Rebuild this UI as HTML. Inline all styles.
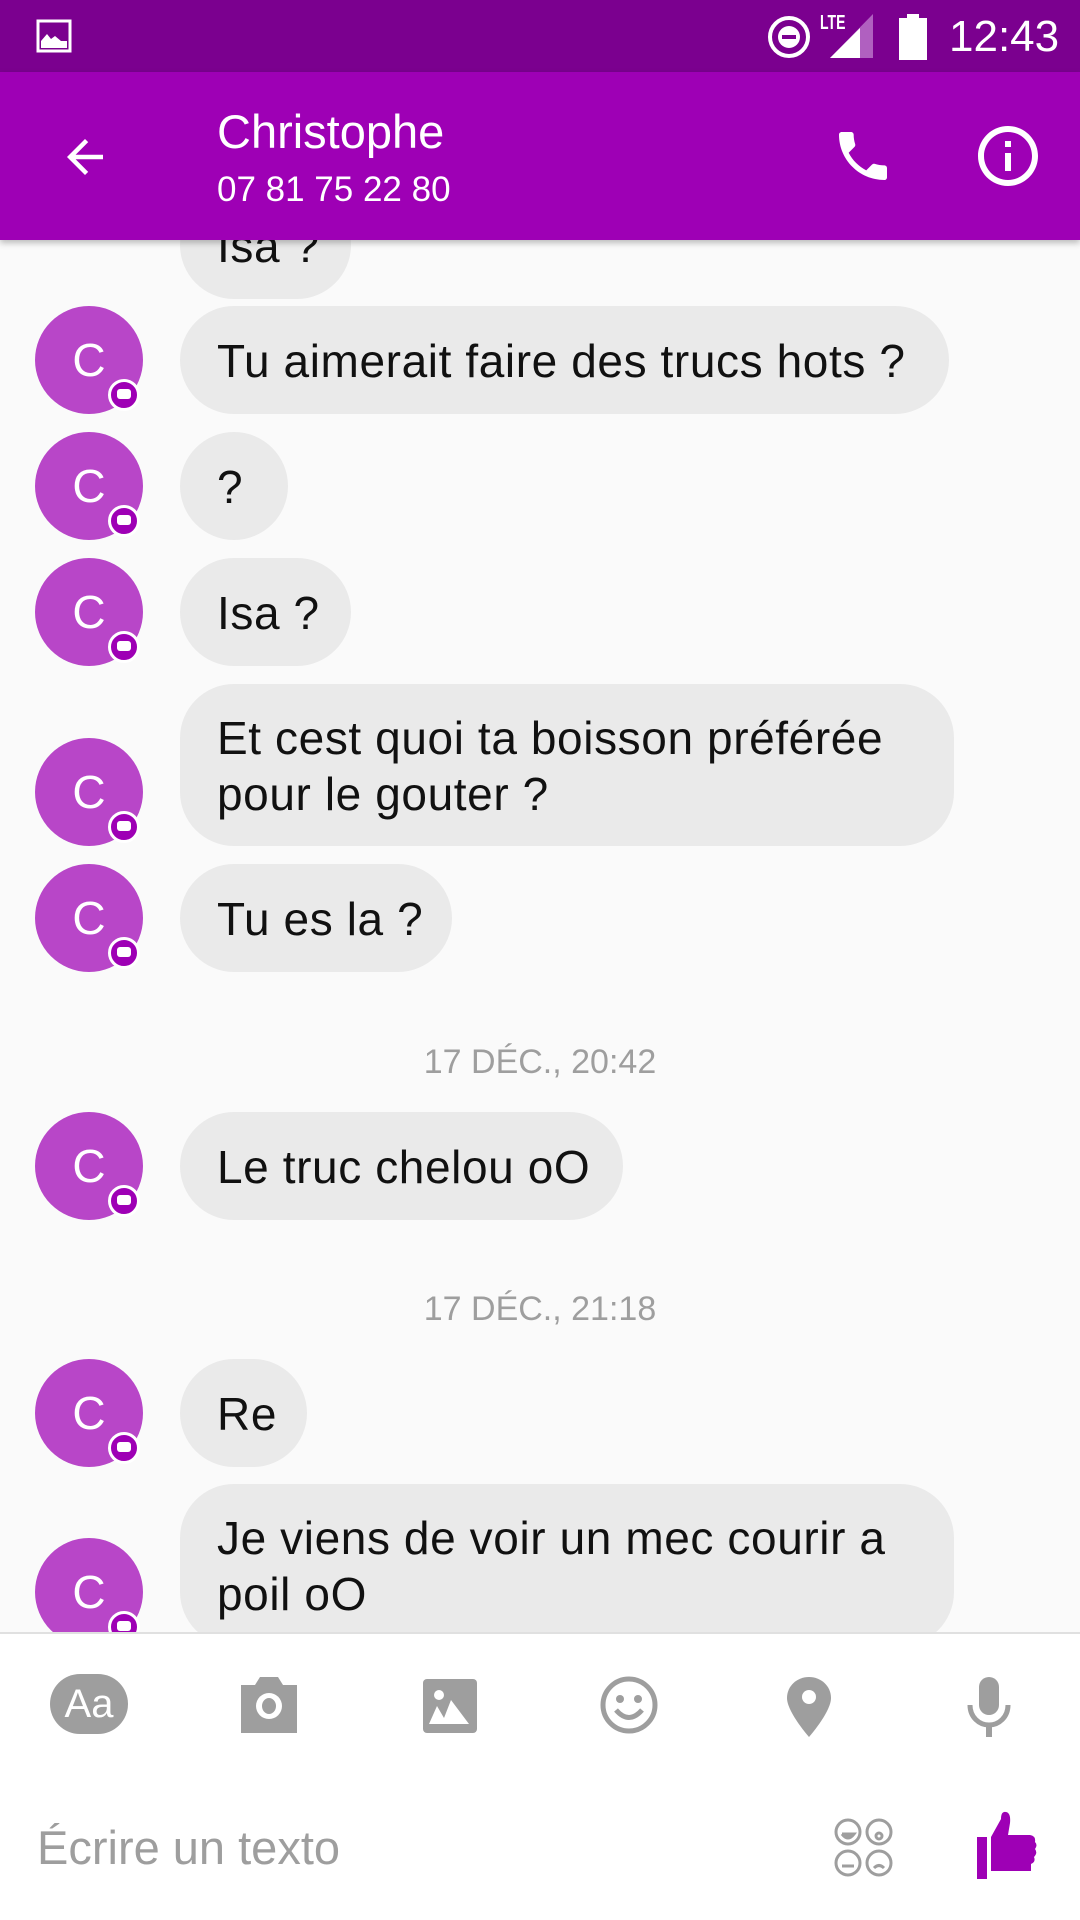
<!DOCTYPE html>
<html><head><meta charset="utf-8"><style>
*{margin:0;padding:0;box-sizing:border-box}
body{width:1080px;height:1920px;overflow:hidden;background:#fafafa;font-family:"Liberation Sans",sans-serif;position:relative}
.sb{position:absolute;left:0;top:0;width:1080px;height:72px;background:#7b008f}
.tb{position:absolute;left:0;top:72px;width:1080px;height:168px;background:#9e00b5;box-shadow:0 3px 6px rgba(0,0,0,.25);z-index:5}
.t1{position:absolute;left:217px;top:32px;color:#fff;font-size:47px}
.t2{position:absolute;left:217px;top:98px;color:#fff;font-size:35px}
.b{position:absolute;left:180px;background:#eaeaea;border-radius:54px;padding:27px 37px 0 37px;font-size:46px;letter-spacing:0.6px;line-height:56px;color:#111;height:108px;white-space:nowrap}
.av{position:absolute;left:35px;width:108px;height:108px;border-radius:50%;background:#b846c8;color:#fff;font-size:46px;text-align:center;line-height:108px}
.bd{position:absolute;left:73px;top:73px;width:32px;height:32px;border-radius:50%;background:#9e00b5;border:3px solid #fff}
.bd:after{content:"";position:absolute;left:6px;top:7px;width:14px;height:10px;background:#fff;border-radius:3px}
.ts{position:absolute;left:0;width:1080px;text-align:center;color:#9e9e9e;font-size:34px}
.bot{position:absolute;left:0;top:1632px;width:1080px;height:288px;background:#fff;border-top:2px solid #e0e0e0;z-index:4}
</style></head><body>
<div class="sb">
<svg style="position:absolute;left:36px;top:19px" width="36" height="34" viewBox="0 0 36 34"><rect x="2" y="2" width="32" height="30" fill="none" stroke="#fff" stroke-width="3"/><path d="M5 29 L5 22 L11 15 L15 20 L19 17 L25 22 L31 22 L31 29Z" fill="#fff"/></svg>
<svg style="position:absolute;left:766px;top:14px" width="46" height="46" viewBox="0 0 46 46"><circle cx="23" cy="23" r="19" fill="none" stroke="#fff" stroke-width="4"/><circle cx="23" cy="23" r="11" fill="#fff"/><rect x="16" y="21" width="14" height="4" fill="#7b008f"/></svg>
<div style="position:absolute;left:820px;top:12px;color:#fff;font-size:20px;font-weight:bold;transform:scaleX(.7);transform-origin:left">LTE</div>
<svg style="position:absolute;left:830px;top:14px" width="45" height="44" viewBox="0 0 45 44"><path d="M43 0 L43 44 L0 44Z" fill="#b060c0"/><path d="M30 14 L30 44 L0 44Z" fill="#fff"/></svg>
<svg style="position:absolute;left:898px;top:14px" width="30" height="46" viewBox="0 0 30 46"><rect x="9" y="0" width="12" height="5" fill="#fff"/><rect x="1" y="4" width="28" height="42" fill="#fff"/></svg>
<div style="position:absolute;left:949px;top:12px;color:#fff;font-size:44px">12:43</div>
</div>
<div class="tb">
<svg style="position:absolute;left:58px;top:58px" width="54" height="54" viewBox="0 0 24 24"><path d="M20 11H7.83l5.59-5.59L12 4l-8 8 8 8 1.41-1.41L7.83 13H20v-2z" fill="#fff"/></svg>
<div class="t1">Christophe</div>
<div class="t2">07 81 75 22 80</div>
<svg style="position:absolute;left:831px;top:52px" width="64" height="64" viewBox="0 0 24 24"><path d="M6.62 10.79c1.440 2.83 3.76 5.14 6.59 6.59l2.2-2.2c.27-.27.67-.36 1.02-.24 1.12.37 2.33.57 3.570.57.55 0 1 .45 1 1V20c0 .55-.45 1-1 1-9.39 0-17-7.61-17-17 0-.55.45-1 1-1h3.5c.55 0 1 .45 1 1 0 1.25.2 2.45.57 3.57.11.35.03.74-.25 1.020l-2.2 2.2z" fill="#fff"/></svg>
<svg style="position:absolute;left:972px;top:48px" width="72" height="72" viewBox="0 0 24 24"><path d="M11 7h2v2h-2zm0 4h2v6h-2zm1-9C6.48 2 2 6.48 2 12s4.48 10 10 10 10-4.48 10-10S17.52 2 12 2zm0 18c-4.41 0-8-3.59-8-8s3.59-8 8-8 8 3.59 8 8-3.59 8-8 8z" fill="#fff"/></svg>
</div>

<div class="b" style="top:191px;width:171px">Isa ?</div>

<div class="av" style="top:306px">C<div class="bd"></div></div>
<div class="b" style="top:306px;width:769px">Tu aimerait faire des trucs hots ?</div>

<div class="av" style="top:432px">C<div class="bd"></div></div>
<div class="b" style="top:432px;width:108px">?</div>

<div class="av" style="top:558px">C<div class="bd"></div></div>
<div class="b" style="top:558px;width:171px">Isa ?</div>

<div class="av" style="top:738px">C<div class="bd"></div></div>
<div class="b" style="top:684px;width:774px;height:162px;padding-top:26px">Et cest quoi ta boisson préférée<br>pour le gouter ?</div>

<div class="av" style="top:864px">C<div class="bd"></div></div>
<div class="b" style="top:864px;width:272px">Tu es la ?</div>

<div class="ts" style="top:1043px">17 DÉC., 20:42</div>

<div class="av" style="top:1112px">C<div class="bd"></div></div>
<div class="b" style="top:1112px;width:443px">Le truc chelou oO</div>

<div class="ts" style="top:1290px">17 DÉC., 21:18</div>

<div class="av" style="top:1359px">C<div class="bd"></div></div>
<div class="b" style="top:1359px;width:127px">Re</div>

<div class="av" style="top:1538px">C<div class="bd"></div></div>
<div class="b" style="top:1484px;width:774px;height:162px;padding-top:26px">Je viens de voir un mec courir a<br>poil oO</div>

<div class="bot">
<div style="position:absolute;left:50px;top:40px;width:78px;height:60px;border-radius:30px;background:#9e9e9e;color:#fff;font-size:40px;text-align:center;line-height:60px">Aa</div>
<svg style="position:absolute;left:239px;top:41px" width="60" height="60" viewBox="0 0 60 60"><path d="M2 10h14l5-8h18l5 8h14v48H2z" fill="#9e9e9e"/><ellipse cx="30" cy="31" rx="13" ry="13" fill="#fff"/><ellipse cx="30" cy="31" rx="7" ry="8" fill="#9e9e9e"/></svg>
<svg style="position:absolute;left:422px;top:44px" width="56" height="56" viewBox="0 0 56 56"><rect x="1" y="1" width="54" height="54" rx="4" fill="#9e9e9e"/><circle cx="17" cy="17" r="5" fill="#fff"/><path d="M7 46 L15 28 L22 40 L29 22 L47 46Z" fill="#fff"/></svg>
<svg style="position:absolute;left:599px;top:41px" width="60" height="60" viewBox="0 0 60 60"><circle cx="30" cy="30" r="26" fill="none" stroke="#9e9e9e" stroke-width="5"/><circle cx="21" cy="24" r="4" fill="#9e9e9e"/><circle cx="39" cy="24" r="4" fill="#9e9e9e"/><path d="M17 35 Q30 50 43 35" fill="none" stroke="#9e9e9e" stroke-width="5"/></svg>
<svg style="position:absolute;left:785px;top:41px" width="48" height="62" viewBox="0 0 48 62"><path d="M24 2C12 2 2 11 2 23c0 14 22 39 22 39s22-25 22-39C46 11 36 2 24 2z" fill="#9e9e9e"/><circle cx="24" cy="22" r="7" fill="#fff"/></svg>
<svg style="position:absolute;left:966px;top:41px" width="46" height="62" viewBox="0 0 46 62"><rect x="13" y="2" width="20" height="38" rx="10" fill="#9e9e9e"/><path d="M4 30c0 12 9 20 19 20s19-8 19-20" fill="none" stroke="#9e9e9e" stroke-width="5"/><rect x="20" y="48" width="6" height="14" fill="#9e9e9e"/></svg>
<div style="position:absolute;left:37px;top:186px;color:#9e9e9e;font-size:47px">Écrire un texto</div>
<svg style="position:absolute;left:833px;top:183px" width="62" height="62" viewBox="0 0 62 62" fill="none" stroke="#9e9e9e" stroke-width="3"><circle cx="15" cy="15" r="12"/><circle cx="46" cy="15" r="12"/><circle cx="15" cy="46" r="12"/><circle cx="46" cy="46" r="12"/><path d="M9 17h12q-6 8-12 0" fill="#9e9e9e"/><circle cx="46" cy="19" r="3"/><path d="M9 49h12"/><path d="M41 51q5-5 10 0"/></svg>
<svg style="position:absolute;left:976px;top:177px" width="62" height="68" viewBox="0 0 62 68"><rect x="1" y="26" width="10" height="42" fill="#9e00b5"/><path d="M15 26 L25 8 Q25 0 30 1 Q35 2 34 12 L32 24 L54 24 Q60 25 59 31 Q62 34 59 38 Q62 42 58 46 Q60 51 55 53 L55 60 L15 60Z" fill="#9e00b5"/></svg>
</div>
</body></html>
